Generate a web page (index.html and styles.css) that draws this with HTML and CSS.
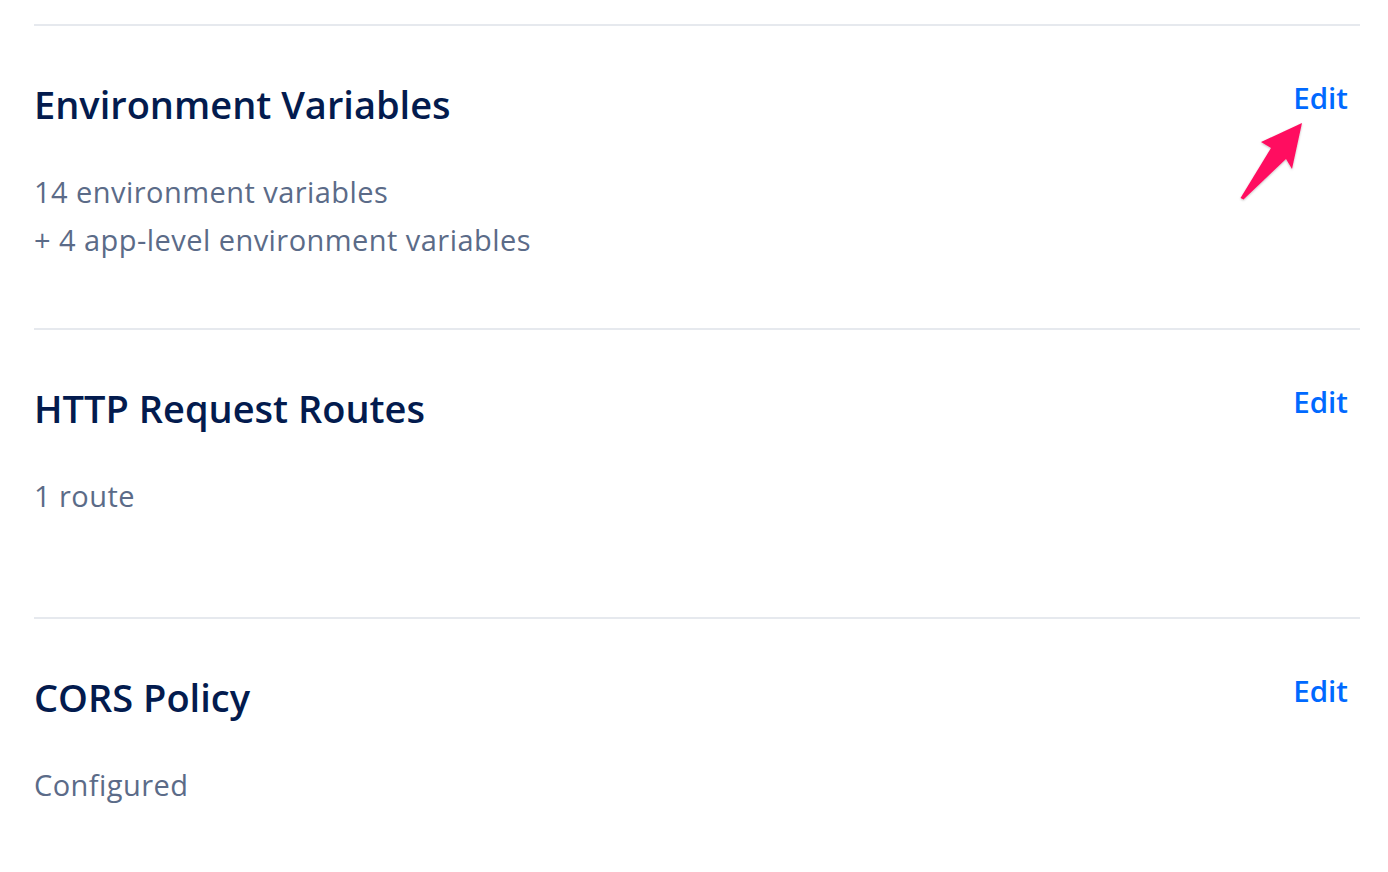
FILE: index.html
```html
<!DOCTYPE html>
<html>
<head>
<meta charset="utf-8">
<link rel="stylesheet" href="styles.css">
</head>
<body>
<main class="page">
  <section class="card">
    <div class="card-head">
      <h2 class="title">Environment Variables</h2>
      <a class="edit" href="#">Edit</a>
    </div>
    <p class="line">14 environment variables</p>
    <p class="line">+ 4 app-level environment variables</p>
  </section>
  <section class="card">
    <div class="card-head">
      <h2 class="title">HTTP Request Routes</h2>
      <a class="edit" href="#">Edit</a>
    </div>
    <p class="line">1 route</p>
  </section>
  <section class="card">
    <div class="card-head">
      <h2 class="title">CORS Policy</h2>
      <a class="edit" href="#">Edit</a>
    </div>
    <p class="line">Configured</p>
  </section>
</main>
<svg class="arrow" width="1388" height="872" viewBox="0 0 1388 872">
  <defs>
    <filter id="sh" x="-20%" y="-20%" width="140%" height="140%">
      <feDropShadow dx="0" dy="1" stdDeviation="1" flood-color="#000" flood-opacity="0.25"/>
    </filter>
  </defs>
  <polygon filter="url(#sh)" fill="#ff1060" points="1240.5,198 1243.5,199.5 1286,159 1292,169 1302,123 1261,142 1271,148"/>
</svg>
</body>
</html>
```
FILE: styles.css
```css
html, body {
  margin: 0;
  padding: 0;
  background: #ffffff;
}
body {
  font-family: "Open Sans", Lato, sans-serif;
  width: 1388px;
  height: 872px;
  overflow: hidden;
  position: relative;
}
.page {
  padding: 24px 28px 0 34px;
}
.card {
  border-top: 2px solid #e6e9ee;
  min-height: 289px;
  padding: 52px 12px 62px 0;
  box-sizing: border-box;
}
.card-head {
  display: flex;
  justify-content: space-between;
  align-items: flex-start;
  margin-bottom: 38px;
}
.title {
  margin: 0;
  font-size: 38px;
  line-height: 52px;
  font-weight: 600;
  color: #031b4e;
}
.edit {
  font-size: 29.5px;
  line-height: 40px;
  font-weight: 600;
  color: #0069ff;
  text-decoration: none;
}
.line {
  margin: 0;
  font-size: 29px;
  line-height: 48px;
  letter-spacing: 0.45px;
  color: #5b6b88;
}
.line + .line {
  margin-bottom: 2px;
}
.arrow {
  position: absolute;
  left: 0;
  top: 0;
  pointer-events: none;
}
```
